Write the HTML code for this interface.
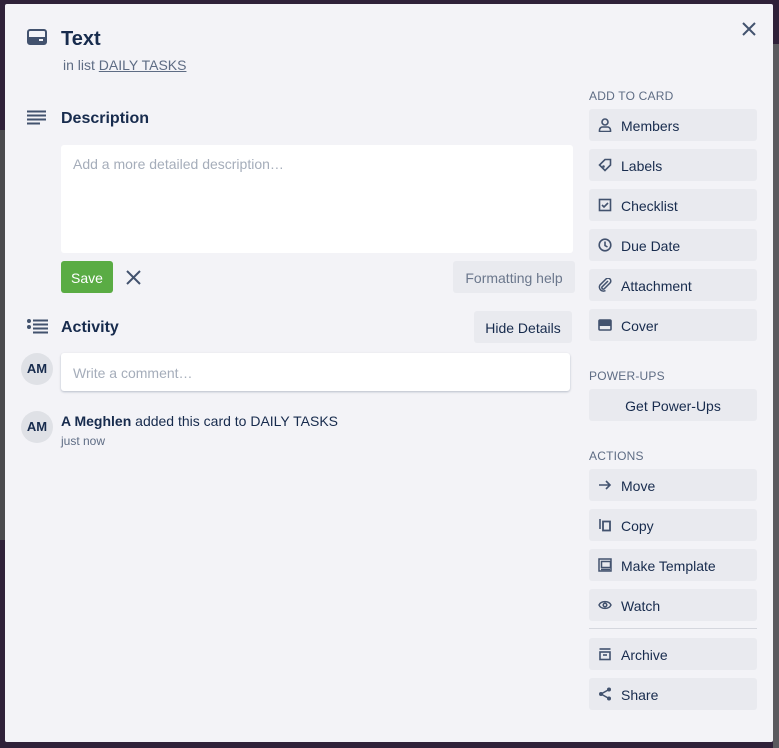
<!DOCTYPE html>
<html><head><meta charset="utf-8"><style>
*{box-sizing:border-box;margin:0;padding:0}
body{width:779px;height:748px;overflow:hidden;background:#2f2139;font-family:"Liberation Sans",sans-serif;color:#172b4d;position:relative}
.bgr{position:absolute;left:773px;top:44px;width:6px;height:704px;background:#5a5a5e}
.bgl{position:absolute;left:0;top:130px;width:5px;height:410px;background:#4a4a4e}
.modal{position:absolute;left:5px;top:4px;width:768px;height:738px;background:#f3f3f7;border-radius:2px}
.a{position:absolute}
.btn{position:absolute;left:589px;width:168px;height:32px;background:#e9eaef;border-radius:3px;font-size:14px;line-height:34px;padding-left:32px;color:#172b4d}
.btn svg{position:absolute;left:9px;top:9px}
.lbl{position:absolute;left:589px;font-size:12px;color:#5e6c84;letter-spacing:.2px}
h3{position:absolute;font-size:16px;font-weight:bold}
.av{position:absolute;left:21px;width:32px;height:32px;border-radius:50%;background:#dfe1e6;font-size:13px;font-weight:bold;text-align:center;line-height:32px}
</style></head><body>
<div class="bgr"></div><div class="bgl"></div>
<div class="modal"></div>
<svg class="a" style="left:27px;top:29px" width="20" height="16" viewBox="0 0 20 16"><rect x="1" y="1" width="18" height="14" rx="2" fill="none" stroke="#42526e" stroke-width="2"/><rect x="1" y="8" width="18" height="7" fill="#42526e"/><rect x="12" y="10" width="4" height="2" fill="#f3f3f7"/></svg>
<div class="a" style="left:61px;top:28px;font-size:20px;font-weight:bold">Text</div>
<div class="a" style="left:63px;top:57px;font-size:14px;color:#5e6c84">in list <span style="text-decoration:underline">DAILY TASKS</span></div>
<svg class="a" style="left:750px;top:22px;margin-left:-8px" width="14" height="14" viewBox="0 0 14 14"><path d="M1 1L13 13M13 1L1 13" stroke="#42526e" stroke-width="2"/></svg>
<svg class="a" style="left:27px;top:110px" width="20" height="15" viewBox="0 0 20 15"><path d="M0 1.5h19M0 5.5h19M0 9.5h19M0 13.5h13" stroke="#42526e" stroke-width="2"/></svg>
<h3 style="left:61px;top:110px">Description</h3>
<div class="a" style="left:61px;top:145px;width:512px;height:108px;background:#fff;border-radius:3px;padding:11px 12px;font-size:14px;color:#a5adba">Add a more detailed description…</div>
<div class="a" style="left:61px;top:261px;width:52px;height:32px;background:#5aac44;border-radius:3px;color:#fff;font-size:14px;line-height:34px;text-align:center">Save</div>
<svg class="a" style="left:126px;top:270px" width="15" height="15" viewBox="0 0 15 15"><path d="M1 1L14 14M14 1L1 14" stroke="#42526e" stroke-width="2"/></svg>
<div class="a" style="left:453px;top:261px;width:122px;height:32px;background:#e9eaef;border-radius:3px;color:#6b778c;font-size:14px;line-height:34px;text-align:center">Formatting help</div>
<svg class="a" style="left:27px;top:319px" width="21" height="15" viewBox="0 0 21 15"><circle cx="2" cy="2" r="2" fill="#42526e"/><circle cx="2" cy="8" r="2" fill="#42526e"/><path d="M6 1.5h15M6 5.5h15M6 9.5h15M6 13.5h15" stroke="#42526e" stroke-width="2"/></svg>
<h3 style="left:61px;top:319px">Activity</h3>
<div class="a" style="left:474px;top:311px;width:98px;height:32px;background:#e9eaef;border-radius:3px;font-size:14px;line-height:34px;text-align:center">Hide Details</div>
<div class="av" style="top:353px">AM</div>
<div class="a" style="left:61px;top:353px;width:509px;height:38px;background:#fff;border-radius:3px;box-shadow:0 1px 2px rgba(9,30,66,.25);padding:13px 12px;font-size:14px;color:#a5adba;line-height:14px">Write a comment…</div>
<div class="av" style="top:411px">AM</div>
<div class="a" style="left:61px;top:413px;font-size:14px"><b>A Meghlen</b> added this card to DAILY TASKS</div>
<div class="a" style="left:61px;top:434px;font-size:12px;color:#5e6c84">just now</div>

<div class="lbl" style="top:89px">ADD TO CARD</div>
<div class="btn" style="top:109px"><svg width="14" height="14" viewBox="0 0 14 14"><circle cx="7" cy="4" r="3" fill="none" stroke="#42526e" stroke-width="1.6"/><path d="M1.5 13.5v-1.5a3 3 0 0 1 3-3h5a3 3 0 0 1 3 3v1.5z" fill="none" stroke="#42526e" stroke-width="1.6"/></svg>Members</div>
<div class="btn" style="top:149px"><svg width="14" height="14" viewBox="0 0 14 14"><path d="M7 1.5h5.5v5.5L7 12.5 1.5 7z" fill="none" stroke="#42526e" stroke-width="1.6"/><circle cx="5.5" cy="8.5" r="1.3" fill="#42526e"/></svg>Labels</div>
<div class="btn" style="top:189px"><svg width="14" height="14" viewBox="0 0 14 14"><rect x="1.5" y="1.5" width="11" height="11" fill="none" stroke="#42526e" stroke-width="1.6"/><path d="M4 7l2 2 4-4" fill="none" stroke="#42526e" stroke-width="1.6"/></svg>Checklist</div>
<div class="btn" style="top:229px"><svg width="14" height="14" viewBox="0 0 14 14"><circle cx="7" cy="7" r="5.8" fill="none" stroke="#42526e" stroke-width="1.6"/><path d="M7 3.5V7.5l2.5 1.5" fill="none" stroke="#42526e" stroke-width="1.6"/></svg>Due Date</div>
<div class="btn" style="top:269px"><svg width="14" height="14" viewBox="0 0 14 14"><path d="M10 3L4 9a1.5 1.5 0 0 0 2 2l6-6a2.8 2.8 0 0 0-4-4L2 7a4 4 0 0 0 5.5 5.5" fill="none" stroke="#42526e" stroke-width="1.5"/></svg>Attachment</div>
<div class="btn" style="top:309px"><svg width="14" height="14" viewBox="0 0 14 14"><rect x="1" y="2" width="12" height="10" rx="1" fill="none" stroke="#42526e" stroke-width="1.6"/><rect x="1" y="2" width="12" height="6" fill="#42526e"/></svg>Cover</div>

<div class="lbl" style="top:369px">POWER-UPS</div>
<div class="btn" style="top:389px;padding-left:0;text-align:center">Get Power-Ups</div>

<div class="lbl" style="top:449px">ACTIONS</div>
<div class="btn" style="top:469px"><svg width="14" height="14" viewBox="0 0 14 14"><path d="M1 7h11M8 3l4 4-4 4" fill="none" stroke="#42526e" stroke-width="1.6"/></svg>Move</div>
<div class="btn" style="top:509px"><svg width="14" height="14" viewBox="0 0 14 14"><path d="M2 1v10" stroke="#42526e" stroke-width="1.6"/><rect x="5" y="3.5" width="7" height="9" fill="none" stroke="#42526e" stroke-width="1.8"/></svg>Copy</div>
<div class="btn" style="top:549px"><svg width="14" height="14" viewBox="0 0 14 14"><rect x="1" y="1" width="12" height="12" fill="none" stroke="#42526e" stroke-width="1.5"/><rect x="3.5" y="3.5" width="9" height="6" fill="none" stroke="#42526e" stroke-width="1.5"/><path d="M3 11.5h9" stroke="#42526e" stroke-width="1.5"/></svg>Make Template</div>
<div class="btn" style="top:589px"><svg width="14" height="14" viewBox="0 0 14 14"><path d="M1 7c2-4.5 10-4.5 12 0c-2 4.5-10 4.5-12 0z" fill="none" stroke="#42526e" stroke-width="1.5"/><circle cx="7" cy="7" r="1.8" fill="none" stroke="#42526e" stroke-width="1.5"/></svg>Watch</div>
<div class="a" style="left:589px;top:628px;width:168px;height:1px;background:#d5d7de"></div>
<div class="btn" style="top:638px"><svg width="14" height="14" viewBox="0 0 14 14"><path d="M1.5 2h11" stroke="#42526e" stroke-width="1.6"/><rect x="2" y="5" width="10" height="7.5" fill="none" stroke="#42526e" stroke-width="1.6"/><path d="M5 8h4" stroke="#42526e" stroke-width="1.6"/></svg>Archive</div>
<div class="btn" style="top:678px"><svg width="14" height="14" viewBox="0 0 14 14"><path d="M11 2.5L3 7l8 4.5" fill="none" stroke="#42526e" stroke-width="1.5"/><circle cx="11" cy="2.5" r="2" fill="#42526e"/><circle cx="3" cy="7" r="2" fill="#42526e"/><circle cx="11" cy="11.5" r="2" fill="#42526e"/></svg>Share</div>
</body></html>
